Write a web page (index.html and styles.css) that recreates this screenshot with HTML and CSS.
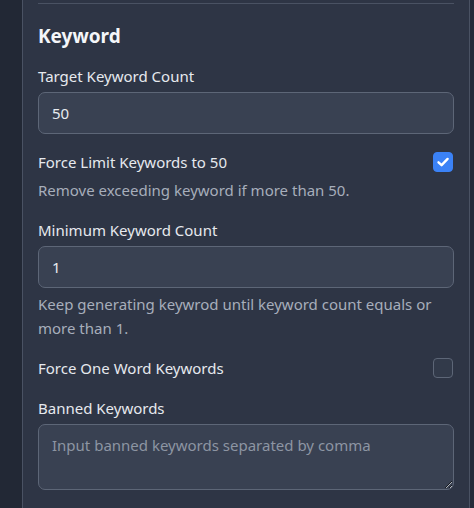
FILE: index.html
```html
<!DOCTYPE html>
<html>
<head>
<meta charset="utf-8">
<link rel="stylesheet" href="styles.css">
</head>
<body>
<div class="layout">
  <div class="rail"></div>
  <div class="panel">
    <div class="prev-divider"></div>
    <h2 class="section-title">Keyword</h2>

    <div class="field">
      <label class="label">Target Keyword Count</label>
      <input class="input" type="text" value="50">
    </div>

    <div class="field">
      <div class="check-row">
        <span class="label">Force Limit Keywords to 50</span>
        <span class="checkbox checked">
          <svg viewBox="0 0 20 20" width="20" height="20"><path d="M5.5 10.3 L8.6 13.2 L14.6 6.9" fill="none" stroke="#fff" stroke-width="2.4" stroke-linecap="round" stroke-linejoin="round"/></svg>
        </span>
      </div>
      <p class="help">Remove exceeding keyword if more than 50.</p>
    </div>

    <div class="field">
      <label class="label">Minimum Keyword Count</label>
      <input class="input" type="text" value="1">
      <p class="help">Keep generating keywrod until keyword count equals or more than 1.</p>
    </div>

    <div class="field">
      <div class="check-row">
        <span class="label">Force One Word Keywords</span>
        <span class="checkbox"></span>
      </div>
    </div>

    <div class="field">
      <label class="label">Banned Keywords</label>
      <textarea class="textarea" placeholder="Input banned keywords separated by comma"></textarea>
    </div>
  </div>
  <div class="rail-right"></div>
</div>
</body>
</html>
```

FILE: styles.css
```css
* { box-sizing: border-box; }
html, body { margin: 0; padding: 0; }
body {
  background: #222835;
  font-family: "Noto Sans", "Open Sans", sans-serif;
  color: #e8ebf0;
  width: 474px;
  height: 508px;
  overflow: hidden;
}
.layout {
  display: flex;
  height: 508px;
}
.rail { width: 22px; flex: none; background: #222835; }
.rail-right { flex: 1; background: #262c39; }
.panel {
  width: 448px;
  flex: none;
  background: #2e3545;
  border-left: 1px solid #4a5263;
  border-right: 1px solid #4a5263;
  padding: 0 15px;
}
.prev-divider {
  height: 4px;
  border-bottom: 1px solid #4a5263;
}
.section-title {
  margin: 18px 0 14px;
  font-size: 19px;
  line-height: 28px;
  font-weight: 700;
  color: #f4f6f9;
}
.field { margin-bottom: 16px; }
.label {
  display: block;
  font-size: 15px;
  line-height: 24px;
  color: #e6e9ee;
  margin-bottom: 4px;
}
.input {
  display: block;
  width: 100%;
  height: 42px;
  background: #394152;
  border: 1px solid #5d6677;
  border-radius: 7px;
  padding: 0 13px;
  font-family: inherit;
  font-size: 15px;
  color: #e8ebf0;
  outline: none;
}
.help {
  margin: 4px 0 0;
  font-size: 15px;
  line-height: 24px;
  color: #a7aebb;
}
.check-row {
  display: flex;
  justify-content: space-between;
  align-items: center;
}
.check-row .label { margin-bottom: 0; }
.checkbox {
  width: 20px;
  height: 20px;
  border-radius: 4px;
  border: 1px solid #5d6677;
  background: #323a4a;
  display: flex;
  margin-right: 1px;
}
.checkbox.checked {
  background: #3b82f6;
  border-color: #3b82f6;
}
.checkbox svg { display: block; margin: -1px; }
.textarea {
  display: block;
  width: 100%;
  height: 66px;
  background: #394152;
  border: 1px solid #5d6677;
  border-radius: 7px;
  padding: 8px 13px;
  font-family: inherit;
  font-size: 15px;
  line-height: 24px;
  color: #e8ebf0;
  outline: none;
  resize: vertical;
}
.textarea::placeholder { color: #8d95a3; }
```
